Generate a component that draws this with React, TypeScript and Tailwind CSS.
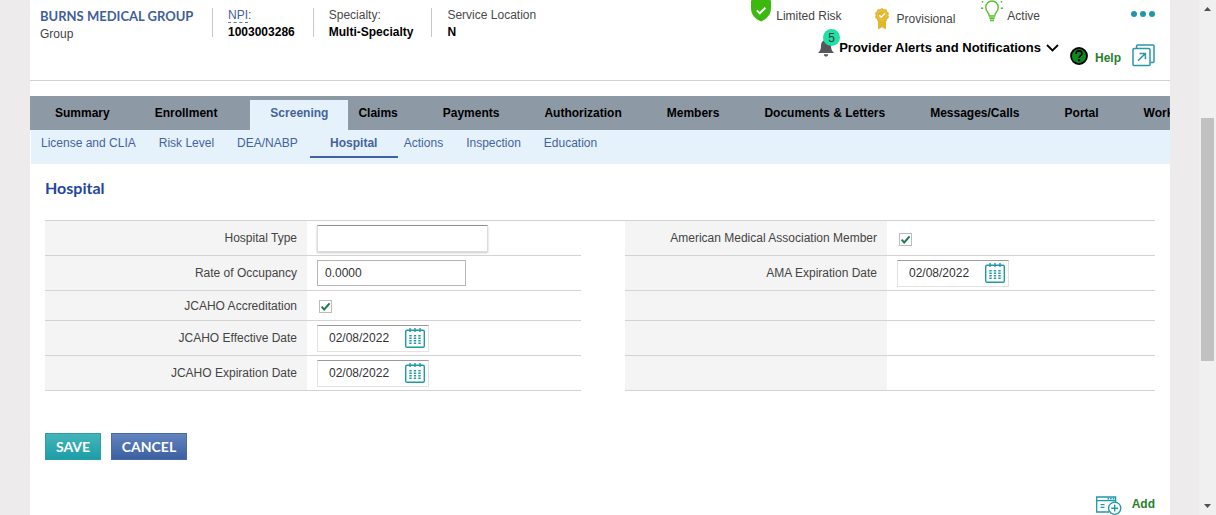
import React, { useState } from "react";

const mainTabs = [
  "Summary",
  "Enrollment",
  "Screening",
  "Claims",
  "Payments",
  "Authorization",
  "Members",
  "Documents & Letters",
  "Messages/Calls",
  "Portal",
  "Work",
];

const subTabs = [
  "License and CLIA",
  "Risk Level",
  "DEA/NABP",
  "Hospital",
  "Actions",
  "Inspection",
  "Education",
];

function ShieldIcon() {
  return (
    <svg className="w-5 h-[22px] shrink-0" viewBox="0 0 20 22" aria-hidden="true">
      <path d="M10-3 L20 0.5 V8 C20 15 15.5 19.2 10 21.5 C4.5 19.2 0 15 0 8 V0.5 Z" fill="#3db80f" />
      <path d="M5.8 10.3 L8.8 13.3 L14.4 7.8" fill="none" stroke="#fff" strokeWidth="1.9" />
    </svg>
  );
}

function RibbonIcon() {
  return (
    <svg className="w-[14px] h-[22px] shrink-0" viewBox="0 0 14 22" aria-hidden="true">
      <path d="M3 13 H11 V21.5 L7 19.3 L3 21.5 Z" fill="#e3b72b" />
      <path
        d="M7 0 L9 1.2 L11.4 1.2 L12.2 3.4 L14 5 L13.4 7.2 L14 9.5 L12.2 11 L11.4 13.2 L9 13.3 L7 14.6 L5 13.3 L2.6 13.2 L1.8 11 L0 9.5 L.6 7.2 L0 5 L1.8 3.4 L2.6 1.2 L5 1.2 Z"
        fill="#e3b72b"
      />
      <circle cx="7" cy="7.2" r="4.6" fill="none" stroke="#f0d271" strokeWidth=".6" />
      <path d="M4.3 7.2 L6.3 9.2 L9.9 5.4" fill="none" stroke="#fff" strokeWidth="1.5" />
    </svg>
  );
}

function BulbIcon() {
  return (
    <svg className="w-[22px] h-[22px] shrink-0" viewBox="0 0 22 22" fill="none" stroke="#55c234" strokeWidth="1.4" aria-hidden="true">
      <path d="M8.3 16 C8.3 12.5 4.8 11.5 4.8 7.4 C4.8 3.8 7.6 1 11 1 C14.4 1 17.2 3.8 17.2 7.4 C17.2 11.5 13.7 12.5 13.7 16 Z" />
      <path d="M8.3 18.2 H13.7 M9 20.4 H13" strokeWidth="1.8" />
      <path d="M0 8.3 H2.2 M19.8 8.3 H22 M2.2 2.4 L1 1.2 M19.8 2.4 L21 1.2" />
    </svg>
  );
}

function BellIcon() {
  return (
    <svg className="w-4 h-[18px] shrink-0" viewBox="0 0 16 18" fill="#55565a" aria-hidden="true">
      <path d="M8 1 C11.2 1 13 3.5 13 6.5 C13 10.5 14 11.8 16 14 H0 C2 11.8 3 10.5 3 6.5 C3 3.5 4.8 1 8 1 Z" />
      <path d="M5.8 15.2 H10.2 C10 16.8 9.2 17.6 8 17.6 C6.8 17.6 6 16.8 5.8 15.2 Z" />
    </svg>
  );
}

function PopOutIcon() {
  return (
    <svg className="w-[23px] h-[23px]" viewBox="0 0 23 23" fill="none" stroke="#2b97a8" strokeWidth="1.5" aria-hidden="true">
      <rect x="1" y="4.6" width="17" height="17" rx="1.2" />
      <path d="M4.6 4.4 V2 Q4.6 1 5.6 1 H21 Q22 1 22 2 V17.4 Q22 18.4 21 18.4 H18.2" />
      <path d="M6 16.8 L13.2 9.6 M7.6 9.4 H13.4 V15.2" />
    </svg>
  );
}

function CalendarIcon() {
  return (
    <svg className="w-5 h-5" viewBox="0 0 20 20" fill="none" stroke="#1f9aa5" aria-hidden="true">
      <rect x=".7" y="2.2" width="18.6" height="17" rx="1.3" strokeWidth="1.4" />
      <path d="M5 0 V4 M10 0 V4 M15 0 V4" strokeWidth="1.4" />
      <path d="M5.5 7 V16 M10 7 V16 M14.5 7 V16" strokeWidth="2.4" strokeDasharray="1.5 1" />
    </svg>
  );
}

function AddWindowIcon() {
  return (
    <svg className="w-[26px] h-[19px]" viewBox="0 0 26 19" fill="none" stroke="#1e98a8" strokeWidth="1.3" aria-hidden="true">
      <path d="M13 16 H.7 V1 H19.6 V6.6" />
      <path d="M.7 4.6 H19.6" />
      <path d="M11.5 2.7 H18.5" strokeWidth="1.8" strokeDasharray="1.6 1" />
      <path d="M4.5 8.6 H8.5 M4.5 11.4 H8.5" strokeWidth="1.4" />
      <circle cx="18.7" cy="12.2" r="6.1" fill="#fff" />
      <path d="M18.7 8.8 V15.6 M15.3 12.2 H22.1" strokeWidth="1.4" />
    </svg>
  );
}

function Fact({ label, value, linked }: { label: string; value: string; linked?: boolean }) {
  return (
    <div className="h-[29px] border-l border-[#c8c8c8] pl-[15px] pr-[18px] leading-[17px]">
      <dt className="-mt-px text-[#4a4a4a]">
        {linked ? (
          <>
            <abbr title="National Provider Identifier" className="border-b border-dashed border-[#5a74a8] text-[#46629c] no-underline">
              {label}
            </abbr>
            :
          </>
        ) : (
          label
        )}
      </dt>
      <dd className="font-bold text-black">{value}</dd>
    </div>
  );
}

function Row({ id, label, short, children }: { id?: string; label?: string; short?: boolean; children?: React.ReactNode }) {
  return (
    <div className={`flex border-b border-[#d3d3d3] ${short ? "h-[30px]" : "h-[35px]"}`}>
      <div className="flex w-[262px] shrink-0 items-center justify-end bg-[#f4f4f4] pr-[10px]">
        {label && <label htmlFor={id}>{label}</label>}
      </div>
      <div className="flex flex-1 items-center pl-[10px]">{children}</div>
    </div>
  );
}

function Tick({ id }: { id: string }) {
  const [on, setOn] = useState(true);
  return (
    <span className="ml-0.5 mt-0.5 grid size-[13px]">
      <input
        id={id}
        type="checkbox"
        checked={on}
        onChange={(e) => setOn(e.target.checked)}
        className="col-start-1 row-start-1 size-[13px] appearance-none border border-[#bcbcbc] bg-white"
      />
      {on && (
        <svg className="pointer-events-none col-start-1 row-start-1 size-[13px]" viewBox="0 0 13 13" aria-hidden="true">
          <path d="M2.6 6.6 L5.2 9.4 L10.6 3.4" fill="none" stroke="#1f7a52" strokeWidth="2" />
        </svg>
      )}
    </span>
  );
}

function DateField({ id, name }: { id: string; name: string }) {
  return (
    <div className="flex h-[27px] w-28 items-center justify-between border border-[#e2e2e2] border-t-[#9a9a9a] bg-white pl-[11px] pr-[3px]">
      <input id={id} defaultValue="02/08/2022" className="w-[70px] bg-transparent text-[#333] outline-none" />
      <button type="button" aria-label={`Choose ${name}`}>
        <CalendarIcon />
      </button>
    </div>
  );
}

export default function App() {
  return (
    <div className="flex h-screen overflow-hidden bg-[#edebeb] font-['Liberation_Sans',Arial,sans-serif] text-xs text-[#444]">
      <div className="ml-[30px] mr-[29px] flex min-w-0 flex-1 flex-col overflow-hidden bg-white">
        <header className="flex h-[81px] shrink-0 justify-between border-b border-[#d0d0d0] pl-[10px] pr-[15px]">
          <div className="flex pt-2">
            <div className="w-[172px] leading-[18px]">
              <h1 className="-mt-px font-['Lato',sans-serif] text-[13px] font-bold text-[#3f6097]">BURNS MEDICAL GROUP</h1>
              <p>Group</p>
            </div>
            <dl className="flex">
              <Fact label="NPI" value="1003003286" linked />
              <Fact label="Specialty:" value="Multi-Specialty" />
              <Fact label="Service Location" value="N" />
            </dl>
          </div>

          <div className="flex flex-col items-end">
            <div className="flex h-8">
              <div className="mr-[33px] flex gap-[5px]">
                <ShieldIcon />
                <span className="leading-8">Limited Risk</span>
              </div>
              <div className="mr-[26px] flex items-center gap-2 pt-1.5">
                <RibbonIcon />
                <span>Provisional</span>
              </div>
              <div className="mr-[91px] flex gap-1">
                <BulbIcon />
                <span className="leading-8">Active</span>
              </div>
              <button type="button" aria-label="More" className="flex items-center gap-[3px] self-center pb-1">
                <span className="size-1.5 rounded-full bg-[#2196a6]" />
                <span className="size-1.5 rounded-full bg-[#2196a6]" />
                <span className="size-1.5 rounded-full bg-[#2196a6]" />
              </button>
            </div>
            <div className="flex items-start">
              <button type="button" className="relative mt-[6px] flex h-[19px] items-center gap-[5px]">
                <BellIcon />
                <span className="absolute -top-[9px] left-[5px] flex size-[17px] items-center justify-center rounded-full bg-[#1fe0a5] text-[#333]">
                  5
                </span>
                <span className="text-[13px] font-bold text-black">Provider Alerts and Notifications</span>
                <svg className="h-2 w-[13px]" viewBox="0 0 13 8" fill="none" stroke="#000" strokeWidth="1.8" aria-hidden="true">
                  <path d="M1 1 L6.5 6.5 L12 1" />
                </svg>
              </button>
              <a href="#help" className="ml-[11px] mt-[15px] flex items-start gap-[7px] font-bold text-[#2a7d2e]">
                <svg className="size-[18px]" viewBox="0 0 18 18" aria-hidden="true">
                  <circle cx="9" cy="9" r="8" fill="#0c8a1c" stroke="#000" strokeWidth="1.8" />
                  <path d="M6 7 C6 4.8 7.3 3.9 9 3.9 C10.8 3.9 12 4.9 12 6.5 C12 8.6 9.1 8.6 9.1 11" fill="none" stroke="#000" strokeWidth="1.7" />
                  <rect x="8" y="12.2" width="2.2" height="2" />
                </svg>
                <span className="leading-[22px]">Help</span>
              </a>
              <button type="button" aria-label="Open in new window" className="ml-[11px] mt-3">
                <PopOutIcon />
              </button>
            </div>
          </div>
        </header>

        <nav className="mt-[15px] shrink-0 overflow-hidden bg-[#8e99a6]" aria-label="Provider">
          <ul className="flex h-[34px] gap-[45px] whitespace-nowrap pl-[25px] font-bold text-black">
            {mainTabs.map((t) =>
              t === "Screening" ? (
                <li key={t} className="-ml-3 -mr-[35px] mt-1 flex w-[98px] shrink-0 items-center justify-center bg-[#e5f2fc] pb-1 text-[#46629c]">
                  <a href="#screening" aria-current="page">{t}</a>
                </li>
              ) : (
                <li key={t} className="flex shrink-0 items-center">
                  <a href="#section">{t}</a>
                </li>
              )
            )}
          </ul>
        </nav>
        <nav className="ml-px shrink-0 bg-[#e5f2fc]" aria-label="Screening">
          <ul className="flex h-[34px] gap-[23px] whitespace-nowrap pl-[10px] text-[#46629c]">
            {subTabs.map((t) =>
              t === "Hospital" ? (
                <li key={t} className="-ml-[11px] -mr-[17px] h-7 w-[88px] shrink-0 border-b-2 border-[#3f61a5] text-center font-bold leading-[26px]">
                  <a href="#hospital" aria-current="page">{t}</a>
                </li>
              ) : (
                <li key={t} className="h-7 shrink-0 leading-[26px]">
                  <a href="#subsection">{t}</a>
                </li>
              )
            )}
          </ul>
        </nav>

        <main className="pl-[15px] pr-[15px]">
          <h2 className="mt-3 font-['Lato',sans-serif] text-base font-bold leading-6 text-[#2446a0]">Hospital</h2>
          <form onSubmit={(e) => e.preventDefault()}>
            <div className="mt-5 grid grid-cols-[536fr_530fr] gap-x-11 border-t border-[#d3d3d3]">
              <div>
                <Row id="type" label="Hospital Type">
                  <input
                    id="type"
                    className="h-[27px] w-[171px] border border-[#dcdcdc] border-t-[#8f8f8f] bg-white px-2 text-[#333] shadow-[0_1px_2px_0_#c8c8c8] outline-none"
                  />
                </Row>
                <Row id="rate" label="Rate of Occupancy">
                  <input
                    id="rate"
                    defaultValue="0.0000"
                    className="h-[26px] w-[149px] border border-[#b5b5b5] bg-white px-[7px] text-[#333] outline-none"
                  />
                </Row>
                <Row id="jcaho" label="JCAHO Accreditation" short>
                  <Tick id="jcaho" />
                </Row>
                <Row id="jeff" label="JCAHO Effective Date">
                  <DateField id="jeff" name="JCAHO Effective Date" />
                </Row>
                <Row id="jexp" label="JCAHO Expiration Date">
                  <DateField id="jexp" name="JCAHO Expiration Date" />
                </Row>
              </div>
              <div>
                <Row id="ama" label="American Medical Association Member">
                  <Tick id="ama" />
                </Row>
                <Row id="amaexp" label="AMA Expiration Date">
                  <DateField id="amaexp" name="AMA Expiration Date" />
                </Row>
                <Row short />
                <Row />
                <Row />
              </div>
            </div>
            <div className="mt-[42px] flex gap-[10px] font-['Lato',sans-serif] text-sm font-bold text-white">
              <button type="submit" className="h-[27px] w-14 border border-[#2f9da3] bg-linear-to-b from-[#42b4ba] to-[#1a9ea8]">
                SAVE
              </button>
              <button type="reset" className="h-[27px] w-[76px] border border-[#4a6ba6] bg-linear-to-b from-[#6284bd] to-[#3c5fa3]">
                CANCEL
              </button>
            </div>
          </form>
          <div className="mt-9 flex justify-end">
            <a href="#add" className="flex gap-[10px] font-bold leading-4 text-[#2a7d2e]">
              <AddWindowIcon />
              Add
            </a>
          </div>
        </main>
      </div>

      <div className="flex w-[17px] shrink-0 flex-col items-center justify-between bg-[#f0f0f0]" aria-hidden="true">
        <svg className="mt-[7px] h-1 w-[7px]" viewBox="0 0 7 4" fill="#505050">
          <path d="M3.5 0 L7 4 H0 Z" />
        </svg>
        <div className="mb-[36px] h-[47%] w-[13px] bg-[#c1c1c1]" />
        <svg className="mb-[7px] h-1 w-[7px]" viewBox="0 0 7 4" fill="#505050">
          <path d="M0 0 H7 L3.5 4 Z" />
        </svg>
      </div>
    </div>
  );
}
